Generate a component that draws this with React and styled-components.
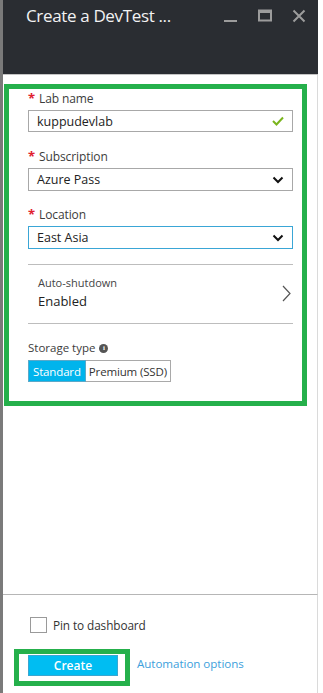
import React from "react";
import styled, { createGlobalStyle } from "styled-components";

const Global = createGlobalStyle`
  html, body { margin: 0; padding: 0; background: #ffffff; }
  body { font-family: "Segoe UI", "Open Sans", "Noto Sans", sans-serif; color: #333; }
  * { box-sizing: border-box; }
`;

const Window = styled.div`
  width: 318px;
  height: 693px;
  display: flex;
  flex-direction: column;
  border-left: 3px solid #7a7a7a;
  background: #fff;
`;

const Header = styled.header`
  height: 75px;
  flex: none;
  background: #2a2d32;
  border-bottom: 1px solid #c4c4c4;
  display: flex;
  align-items: flex-start;
  justify-content: space-between;
  padding: 4px 12px 0 23px;
`;

const Title = styled.h1`
  margin: 0;
  font-size: 17px;
  font-weight: 400;
  color: #f2f2f2;
  line-height: 24px;
  letter-spacing: -0.35px;
`;

const Controls = styled.div`
  display: flex;
  align-items: center;
  gap: 20px;
  padding-top: 5px;
`;

const CtlIcon = styled.svg`
  display: block;
  width: 14px;
  height: 14px;
  color: #9c9c9c;
`;

const Body = styled.main`
  flex: 1;
  padding: 9px 10px 0 1px;
  border-right: 1px solid #dadada;
`;

const Highlight = styled.div`
  border: 5px solid #25b04b;
  padding: ${(p) => p.$pad};
`;

const Form = styled.div`
  display: flex;
  flex-direction: column;
`;

const Field = styled.div`
  display: flex;
  flex-direction: column;
  gap: 3px;
  margin-bottom: ${(p) => p.$mb || 0}px;
`;

const Label = styled.label`
  font-size: 12px;
  line-height: 16px;
  color: #3c3c3c;
  display: flex;
  align-items: center;
  gap: 5px;
  letter-spacing: -0.1px;
`;

const Star = styled.span`
  color: #e0202e;
  font-size: 13px;
  font-weight: 700;
  line-height: 10px;
  width: 6px;
  align-self: flex-start;
  padding-top: 2px;
`;

const Box = styled.div`
  height: ${(p) => p.$h}px;
  border: 1px solid ${(p) => (p.$active ? "#3aa6d6" : "#a8a8a8")};
  display: flex;
  align-items: center;
  justify-content: space-between;
  padding: 0 8px 0 8px;
  font-size: 12.5px;
  color: #222;
  background: #fff;
`;

const Divider = styled.hr`
  margin: 0;
  border: 0;
  border-top: 1px solid #bdbdbd;
`;

const NavRow = styled.div`
  display: flex;
  align-items: center;
  justify-content: space-between;
  padding: 10px 2px 12px 10px;
`;

const NavText = styled.div`
  display: flex;
  flex-direction: column;
`;

const NavLabel = styled.span`
  font-size: 11px;
  line-height: 16px;
  color: #444;
`;

const NavValue = styled.span`
  font-size: 13px;
  line-height: 20px;
  color: #222;
`;

const StorageLabel = styled.div`
  font-size: 11.5px;
  line-height: 16px;
  color: #3c3c3c;
  display: flex;
  align-items: center;
  gap: 4px;
  margin-top: 16px;
`;

const Info = styled.span`
  width: 9px;
  height: 9px;
  border-radius: 50%;
  background: #555;
  color: #fff;
  font-size: 7px;
  font-weight: 700;
  line-height: 9px;
  text-align: center;
  font-family: "Liberation Serif", serif;
`;

const Segments = styled.div`
  display: flex;
  margin-top: 4px;
`;

const Segment = styled.button`
  height: 22px;
  padding: 0 ${(p) => p.$px}px;
  font-family: inherit;
  font-size: 11.5px;
  letter-spacing: -0.15px;
  border: 1px solid ${(p) => (p.$on ? "#5aa9c9" : "#a9a9a9")};
  border-left-width: ${(p) => (p.$first ? 1 : 0)}px;
  background: ${(p) => (p.$on ? "#00b4ec" : "#fff")};
  color: ${(p) => (p.$on ? "#fff" : "#333")};
  cursor: pointer;
`;

const Footer = styled.footer`
  flex: none;
  height: 99px;
  border-top: 1px solid #b6b6b6;
  border-right: 1px solid #dadada;
  padding: 22px 10px 0 11px;
  display: flex;
  flex-direction: column;
`;

const CheckRow = styled.label`
  display: flex;
  align-items: center;
  gap: 6px;
  padding-left: 16px;
  font-size: 11.8px;
  letter-spacing: -0.1px;
  color: #333;
  margin-bottom: 16px;
`;

const CheckBox = styled.span`
  width: 17px;
  height: 16px;
  border: 1px solid #9a9a9a;
  background: #fff;
`;

const ActionRow = styled.div`
  display: flex;
  align-items: flex-start;
  gap: 7px;
`;

const CreateButton = styled.button`
  width: 90px;
  height: 21px;
  background: #00bdf2;
  border: 1px solid #3aa6d0;
  color: #fff;
  font-family: inherit;
  font-weight: 600;
  font-size: 12px;
  padding: 0;
  display: block;
`;

const Link = styled.a`
  margin-top: 7px;
  font-size: 11.6px;
  line-height: 16px;
  letter-spacing: -0.05px;
  color: #3d9fdc;
  text-decoration: none;
`;

const Chevron = () => (
  <svg width="12" height="8" viewBox="0 0 12 8">
    <polyline points="1.5,1.5 6,6 10.5,1.5" fill="none" stroke="#111" strokeWidth="2" />
  </svg>
);

const Check = () => (
  <svg width="12" height="10" viewBox="0 0 12 10">
    <polyline points="1,5 4.5,8.5 11,1.5" fill="none" stroke="#7ab51d" strokeWidth="2" />
  </svg>
);

const ChevronRight = () => (
  <svg width="9" height="17" viewBox="0 0 9 17">
    <polyline points="1,1 8,8.5 1,16" fill="none" stroke="#555" strokeWidth="1.2" />
  </svg>
);

export default function App() {
  return (
    <>
      <Global />
      <Window>
        <Header>
          <Title>Create a DevTest ...</Title>
          <Controls>
            <CtlIcon viewBox="0 0 14 14">
              <rect x="0" y="11" width="13" height="2" fill="currentColor" />
            </CtlIcon>
            <CtlIcon viewBox="0 0 14 14">
              <rect x="1" y="1.5" width="12" height="10" fill="none" stroke="currentColor" strokeWidth="2" />
              <rect x="1" y="1" width="12" height="3" fill="currentColor" />
            </CtlIcon>
            <CtlIcon viewBox="0 0 14 14">
              <path d="M1.5 1.5 L12.5 12.5 M12.5 1.5 L1.5 12.5" stroke="currentColor" strokeWidth="2" />
            </CtlIcon>
          </Controls>
        </Header>
        <Body>
          <Highlight $pad="2px 9px 19px 19px">
            <Form>
              <Field $mb={17}>
                <Label><Star>*</Star>Lab name</Label>
                <Box $h={22}>kuppudevlab<Check /></Box>
              </Field>
              <Field $mb={16}>
                <Label><Star>*</Star>Subscription</Label>
                <Box $h={23}>Azure Pass<Chevron /></Box>
              </Field>
              <Field $mb={15}>
                <Label><Star>*</Star>Location</Label>
                <Box $h={23} $active>East Asia<Chevron /></Box>
              </Field>
              <Divider />
              <NavRow>
                <NavText>
                  <NavLabel>Auto-shutdown</NavLabel>
                  <NavValue>Enabled</NavValue>
                </NavText>
                <ChevronRight />
              </NavRow>
              <Divider />
              <StorageLabel>Storage type <Info>i</Info></StorageLabel>
              <Segments>
                <Segment $on $first $px={4}>Standard</Segment>
                <Segment $px={3}>Premium (SSD)</Segment>
              </Segments>
            </Form>
          </Highlight>
        </Body>
        <Footer>
          <CheckRow><CheckBox />Pin to dashboard</CheckRow>
          <ActionRow>
            <Highlight $pad="1px 7px 5px 9px">
              <CreateButton>Create</CreateButton>
            </Highlight>
            <Link href="#">Automation options</Link>
          </ActionRow>
        </Footer>
      </Window>
    </>
  );
}
